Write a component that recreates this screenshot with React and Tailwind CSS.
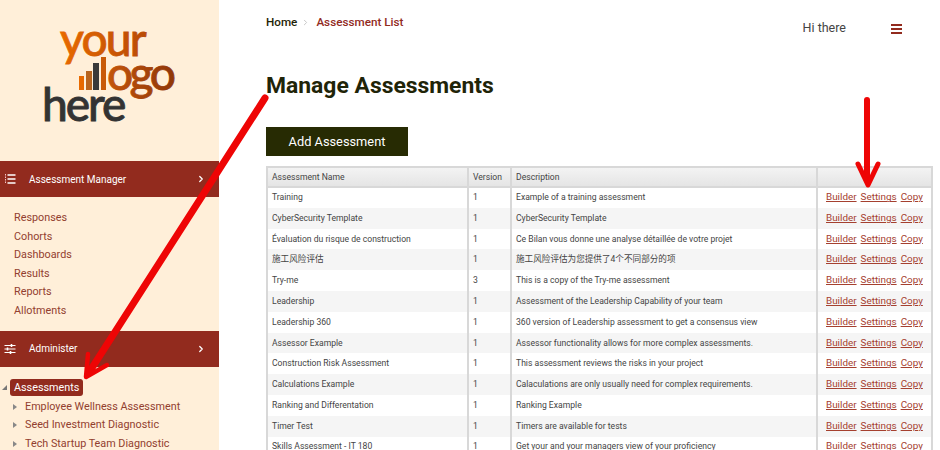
import { ChevronRight } from "lucide-react";

const rows = [
  ["Training", "1", "Example of a training assessment"],
  ["CyberSecurity Template", "1", "CyberSecurity Template"],
  ["Évaluation du risque de construction", "1", "Ce Bilan vous donne une analyse détaillée de votre projet"],
  ["施工风险评估", "1", "施工风险评估为您提供了4个不同部分的项"],
  ["Try-me", "3", "This is a copy of the Try-me assessment"],
  ["Leadership", "1", "Assessment of the Leadership Capability of your team"],
  ["Leadership 360", "1", "360 version of Leadership assessment to get a consensus view"],
  ["Assessor Example", "1", "Assessor functionality allows for more complex assessments."],
  ["Construction Risk Assessment", "1", "This assessment reviews the risks in your project"],
  ["Calculations Example", "1", "Calaculations are only usually need for complex requirements."],
  ["Ranking and Differentation", "1", "Ranking Example"],
  ["Timer Test", "1", "Timers are available for tests"],
  ["Skills Assessment - IT 180", "1", "Get your and your managers view of your proficiency"],
];

const menuLinks = ["Responses", "Cohorts", "Dashboards", "Results", "Reports", "Allotments"];
const trees = ["Employee Wellness Assessment", "Seed Investment Diagnostic", "Tech Startup Team Diagnostic"];

function Logo() {
  return (
    <svg width="160" height="110" viewBox="0 0 160 110" className="block overflow-visible">
      <defs>
        <linearGradient id="logoGrad" x1="0" x2="1" y1="0" y2="0">
          <stop offset="0" stopColor="#e86a00" />
          <stop offset="1" stopColor="#b84a06" />
        </linearGradient>
        <linearGradient id="logoGrad2" x1="0" x2="1" y1="0" y2="0">
          <stop offset="0" stopColor="#c4560a" />
          <stop offset="1" stopColor="#8f3608" />
        </linearGradient>
      </defs>
      <text x="16" y="26" fontFamily="Lato, sans-serif" fontSize="46" fontWeight="500" letterSpacing="-1.8" fill="url(#logoGrad)" stroke="url(#logoGrad)" strokeWidth="0.8">your</text>
      <rect x="35" y="46" width="5" height="14" fill="#e86a00" />
      <rect x="42" y="41" width="6" height="19" fill="#b9651e" />
      <rect x="49" y="33" width="6" height="27" fill="#3a3a3a" />
      <rect x="57" y="27" width="5" height="33" fill="#c85a08" />
      <text x="63" y="60" fontFamily="Lato, sans-serif" fontSize="46" fontWeight="500" letterSpacing="-3.5" fill="url(#logoGrad2)" stroke="url(#logoGrad2)" strokeWidth="0.8">ogo</text>
      <text x="-2" y="91" fontFamily="Lato, sans-serif" fontSize="46" fontWeight="500" letterSpacing="-2" fill="#333333" stroke="#333333" strokeWidth="0.8">here</text>
    </svg>
  );
}

function ListIcon() {
  return (
    <svg width="12" height="12" viewBox="0 0 12 12" fill="none">
      <path d="M1.5 1v10" stroke="#f4c4c4" strokeWidth="1" strokeDasharray="1.5 1" />
      <path d="M3.5 2h8M3.5 6h8M3.5 10h8" stroke="#ffffff" strokeWidth="1.4" />
    </svg>
  );
}

function SliderIcon() {
  return (
    <svg width="12" height="10" viewBox="0 0 12 10" fill="none" stroke="#ffffff">
      <path d="M0.5 1.5h11M0.5 5h11M0.5 8.5h11" strokeWidth="1" />
      <path d="M7.5 0v3M3.5 3.5v3M6.5 7v3" strokeWidth="1.6" />
    </svg>
  );
}

function MenuBar({ icon, label }) {
  return (
    <div className="flex h-[36px] items-center bg-[#922b1e] pl-1 pr-[13px] text-white">
      <span className="flex w-[25px] items-center">{icon}</span>
      <span className="flex-1 text-[10px]">{label}</span>
      <ChevronRight size={10} strokeWidth={3} />
    </div>
  );
}

export default function App() {
  return (
    <div className="relative flex h-[450px] w-[940px] overflow-hidden bg-white font-['Roboto',sans-serif]">
      {/* Sidebar */}
      <aside className="w-[219px] shrink-0 bg-[#ffefd9]">
        <div className="flex h-[161px] pl-[44px] pt-[30px]">
          <Logo />
        </div>
        <MenuBar icon={<ListIcon />} label="Assessment Manager" />
        <ul className="pl-[14px] pt-[12px] text-[10.8px] leading-[18.6px] text-[#92402f]">
          {menuLinks.map((link) => (
            <li key={link}>{link}</li>
          ))}
        </ul>
        <div className="h-[10px]" />
        <MenuBar icon={<SliderIcon />} label="Administer" />
        <div className="flex items-center pl-[2px] pt-[12px]">
          <span className="mr-[3px] h-0 w-0 border-b-[5px] border-l-[5px] border-b-[#777] border-l-transparent" />
          <span className="rounded-[3px] bg-[#922b1e] px-1 text-[10.8px] leading-[17px] text-white">Assessments</span>
        </div>
        <ul className="pl-[13px] pt-[2px] text-[10.8px] leading-[18.6px] text-[#92402f]">
          {trees.map((tree) => (
            <li key={tree} className="flex items-center">
              <span className="mr-[8px] h-0 w-0 border-y-[3px] border-l-[4px] border-y-transparent border-l-[#888]" />
              {tree}
            </li>
          ))}
        </ul>
      </aside>

      {/* Main */}
      <main className="flex-1 pl-[47px] pr-2">
        <div className="flex h-[44px] items-start pt-[14px]">
          <span className="text-[11.7px] font-medium text-[#1f2408]">Home</span>
          <ChevronRight size={9} strokeWidth={2.5} className="ml-[4px] mr-[6px] mt-[4px] text-[#c4c4c4]" />
          <span className="text-[11.7px] font-medium text-[#922b1e]">Assessment List</span>
          <span className="ml-auto mr-[45px] mt-[-1px] pt-[6px] text-[12.5px] text-[#444]">Hi there</span>
          <span className="mr-[31px] mt-[10px] flex w-[11px] flex-col gap-[2px]">
            <span className="h-[2px] bg-[#922b1e]" />
            <span className="h-[2px] bg-[#922b1e]" />
            <span className="h-[2px] bg-[#922b1e]" />
          </span>
        </div>
        <h1 className="mt-[26px] text-[22.9px] font-bold leading-[32px] text-[#1f2408]">Manage Assessments</h1>
        <button className="mt-[25px] block h-[29px] w-[142px] bg-[#272b03] text-[12.8px] text-white">Add Assessment</button>
        <table className="mt-[10px] w-[665px] table-fixed border-collapse border-2 border-[#d8d8d8] text-[8.6px] text-[#444]">
          <colgroup>
            <col className="w-[201px]" />
            <col className="w-[43px]" />
            <col className="w-[306px]" />
            <col className="w-[115px]" />
          </colgroup>
          <thead>
            <tr className="h-[20px] bg-gradient-to-b from-[#f4f4f4] to-[#e4e4e4]">
              <th className="border-2 border-[#d8d8d8] pl-[4px] text-left font-normal">Assessment Name</th>
              <th className="border-2 border-[#d8d8d8] pl-[4px] text-left font-normal">Version</th>
              <th className="border-2 border-[#d8d8d8] pl-[4px] text-left font-normal">Description</th>
              <th className="border-2 border-[#d8d8d8]" />
            </tr>
          </thead>
          <tbody>
            {rows.map((row, i) => (
              <tr key={row[0]} className={i % 2 === 1 ? "h-[20.8px] bg-[#f5f5f5]" : "h-[20.8px] bg-white"}>
                <td className="border-x-2 border-[#d8d8d8] pl-[4px] font-['Roboto','Noto_Sans_CJK_SC',sans-serif]">{row[0]}</td>
                <td className="border-x-2 border-[#d8d8d8] pl-[4px]">{row[1]}</td>
                <td className="border-x-2 border-[#d8d8d8] pl-[4px] font-['Roboto','Noto_Sans_CJK_SC',sans-serif]">{row[2]}</td>
                <td className="border-x-2 border-[#d8d8d8] pl-[8px] text-[9.9px] text-[#a5402f] underline">
                  <span className="mr-[4px]">Builder</span>
                  <span className="mr-[4px]">Settings</span>
                  <span>Copy</span>
                </td>
              </tr>
            ))}
          </tbody>
        </table>
      </main>

      {/* Red annotation arrows on top of the screenshot */}
      <svg className="pointer-events-none absolute left-0 top-0" width="940" height="450" fill="none" stroke="#ee0505" strokeLinecap="round" strokeLinejoin="round">
        <path d="M265 98 L90 371" strokeWidth="7" />
        <path d="M88 354 L86 377 L107 365" strokeWidth="4.5" />
        <path d="M867 100 L867 180" strokeWidth="6" />
        <path d="M858 164 L868 185 L878 164" strokeWidth="5" />
      </svg>
    </div>
  );
}
